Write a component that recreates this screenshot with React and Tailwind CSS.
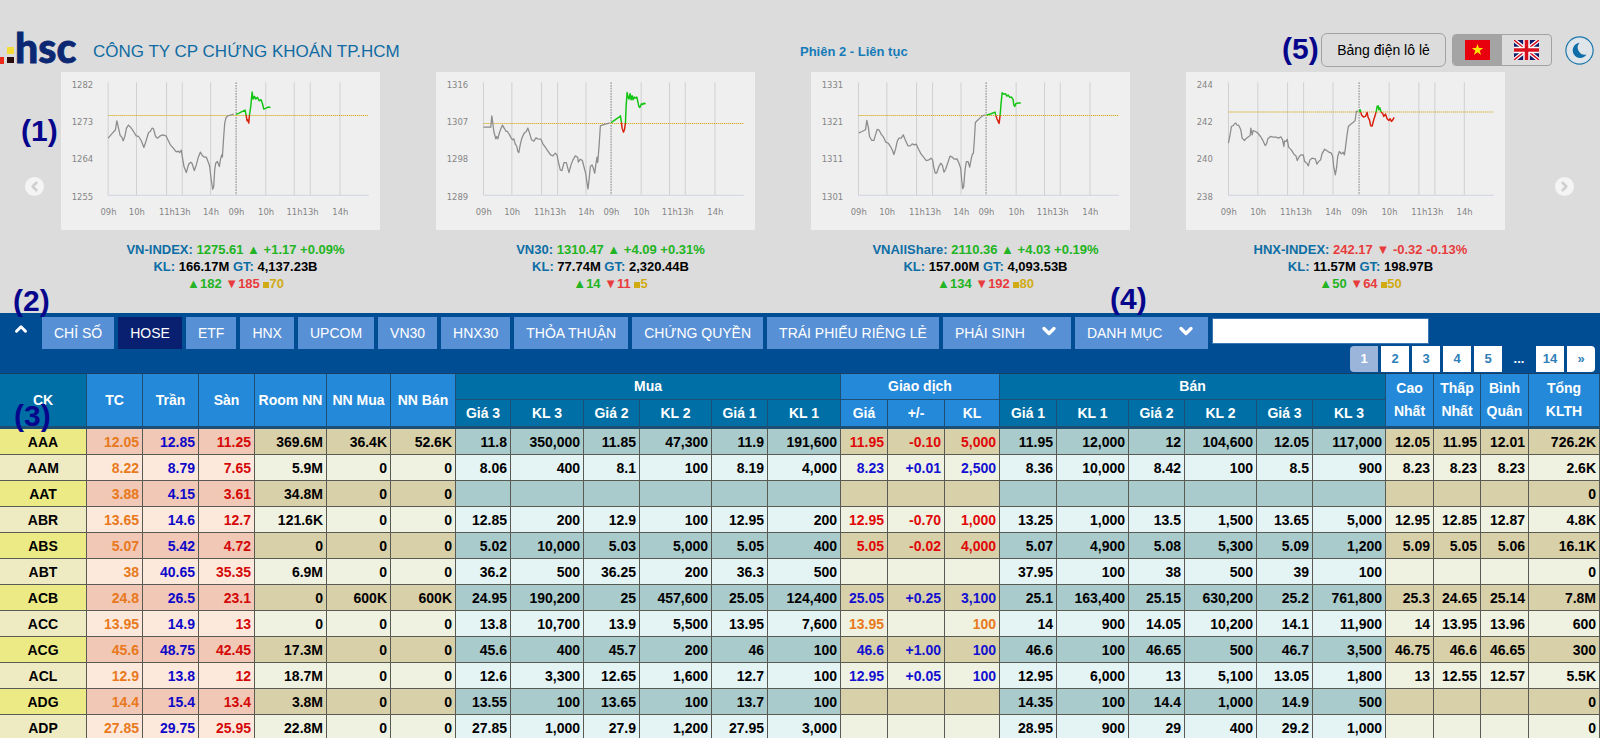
import React, { useState } from 'react';
import { ChevronDown, ChevronLeft, ChevronRight, ChevronUp } from 'lucide-react';

const HOURS = ['09h', '10h', '11h', '13h', '14h', '09h', '10h', '11h', '13h', '14h'];

const INDEXES = [
  {
    name: 'VN-INDEX',
    value: '1275.61',
    change: '+1.17 +0.09%',
    up: true,
    volume: '166.17M',
    total: '4,137.23B',
    counts: ['182', '185', '70'],
    levels: ['1282', '1273', '1264', '1255'],
    grid: [141, 226, 316, 363, 448, 524, 613, 698, 746, 835],
    dx: -183,
    reference: 130,
    previous:
      '324,355 335,342 346,330 350,303 353,315 360,347 365,352 369,363 374,350 379,325 385,316 391,322 400,335 408,348 415,350 423,362 431,383 437,365 445,338 450,335 456,325 460,327 466,350 472,355 480,348 488,345 497,348 504,362 511,376 519,385 528,396 534,394 538,398 543,391 546,410 551,440 558,458 565,433 571,427 575,430 582,452 588,435 594,412 600,397 606,407 612,412 618,412 625,430 628,440 632,475 637,508 640,500 643,450 646,430 651,425 657,440 660,420 664,405 666,412 670,350 673,310 677,293 683,288 700,283',
    today: [
      ['up', '707,284 716,280 726,275 734,271 737,286'],
      ['down', '737,286 740,303 742,300 745,310 747,286'],
      ['up', '747,286 751,260 755,217 758,238 762,230 766,238 771,233 776,243 782,240 786,252 790,268 797,265 803,262 810,263'],
    ],
  },
  {
    name: 'VN30',
    value: '1310.47',
    change: '+4.09 +0.31%',
    up: true,
    volume: '77.74M',
    total: '2,320.44B',
    counts: ['14', '11', '5'],
    levels: ['1316', '1307', '1298', '1289'],
    grid: [142, 227, 316, 364, 449, 524, 614, 699, 746, 835],
    dx: -48,
    reference: 154,
    previous:
      '190,322 212,322 215,288 218,310 221,335 227,357 230,350 233,357 238,338 243,325 247,316 252,325 258,335 262,335 268,345 273,355 277,360 281,357 285,372 290,380 293,395 296,398 300,375 305,355 312,340 318,335 323,325 328,340 334,360 341,364 347,354 353,357 362,358 368,372 375,382 382,392 391,405 398,408 405,400 410,405 414,425 420,450 425,452 431,428 438,428 446,458 452,435 458,420 465,408 472,412 474,427 480,418 486,422 492,445 496,460 500,490 503,507 507,470 510,440 515,435 519,445 523,460 527,430 530,412 532,428 536,380 540,318 545,316 568,309',
    today: [
      ['up', '572,309 580,303 590,296 598,291 600,288 603,308'],
      ['down', '603,308 605,325 609,337 612,330 615,310'],
      ['up', '615,310 617,260 620,218 623,232 626,238 629,222 632,240 635,228 638,240 641,232 645,235 649,232 652,245 655,260 658,263 663,252 667,254 671,250 675,253'],
    ],
  },
  {
    name: 'VNAllShare',
    value: '2110.36',
    change: '+4.03 +0.19%',
    up: true,
    volume: '157.00M',
    total: '4,093.53B',
    counts: ['134', '192', '80'],
    levels: ['1331', '1321', '1311', '1301'],
    grid: [142, 227, 316, 364, 449, 524, 614, 699, 746, 835],
    dx: -33,
    reference: 130,
    previous:
      '176,339 186,335 196,330 200,302 205,325 208,350 215,362 221,362 226,345 231,329 236,330 243,343 250,352 257,367 264,370 272,382 277,392 281,404 286,388 291,365 296,355 303,355 309,345 315,360 323,378 330,378 336,372 342,375 348,373 355,388 362,402 370,412 378,422 386,420 392,415 397,420 400,440 405,460 409,460 415,442 421,430 426,436 431,457 436,448 442,430 449,409 456,412 462,418 470,417 476,430 481,445 484,480 487,506 490,500 494,450 498,425 503,425 508,442 512,420 516,403 519,400 522,360 525,308 530,303 545,289 554,285',
    today: [
      ['up', '558,286 572,282 584,277 586,287'],
      ['down', '586,287 590,298 596,311 599,287'],
      ['up', '599,287 602,250 605,219 609,223 615,222 619,229 623,226 628,233 633,232 638,240 640,256 643,260 646,252 652,250 661,250'],
    ],
  },
  {
    name: 'HNX-INDEX',
    value: '242.17',
    change: '-0.32 -0.13%',
    up: false,
    volume: '11.57M',
    total: '198.97B',
    counts: ['50', '64', '50'],
    levels: ['244', '242', '240', '238'],
    grid: [127, 215, 304, 352, 440, 518, 608, 697, 745, 833],
    dx: -75,
    reference: 120,
    previous:
      '202,370 206,350 211,320 217,317 220,312 224,310 227,315 233,317 239,330 243,355 250,362 256,355 263,350 267,347 269,325 273,345 276,332 283,335 290,340 298,350 304,360 312,377 316,372 320,357 328,350 336,352 344,352 352,355 359,351 364,360 368,380 370,363 375,365 378,358 382,382 390,390 398,403 404,408 408,422 414,410 420,405 426,405 430,425 437,430 441,438 446,420 452,415 458,416 462,417 467,433 472,425 478,420 482,402 490,388 497,393 503,397 510,400 514,410 517,440 522,465 526,440 529,410 534,395 540,402 545,397 549,405 552,385 557,345 561,320 567,314 574,309 581,303 585,275 590,274',
    today: [
      ['up', '594,277 596,270 598,277'],
      ['down', '598,277 601,287 607,292 612,290 617,278 620,293 624,300 628,318 632,319 637,300 641,287 644,277'],
      ['up', '644,277 647,260 650,258 652,270 655,264 659,277'],
      ['down', '659,277 664,282 667,290 672,283 677,297 682,302 686,297 690,305 694,300 698,293'],
    ],
  },
];

const TABS = [
  'CHỈ SỐ',
  'HOSE',
  'ETF',
  'HNX',
  'UPCOM',
  'VN30',
  'HNX30',
  'THỎA THUẬN',
  'CHỨNG QUYỀN',
  'TRÁI PHIẾU RIÊNG LẺ',
];

const PAGES = ['1', '2', '3', '4', '5', '...', '14', '»'];

const COL_WIDTHS = [
  87, 56, 56, 56, 72, 64, 65, 55, 73, 56, 72, 56, 73, 47, 57, 55, 57, 72, 56, 72, 56, 73, 48, 47, 48, 71,
];

const SUB_HEADERS = [
  'Giá 3', 'KL 3', 'Giá 2', 'KL 2', 'Giá 1', 'KL 1',
  'Giá', '+/-', 'KL',
  'Giá 1', 'KL 1', 'Giá 2', 'KL 2', 'Giá 3', 'KL 3',
];

// ck | tc tran san | room nnmua nnban | mua x6 | gia +/- kl | ban x6 | cao thap binhquan tong
const ROWS = `
AAA|12.05|12.85|11.25|369.6M|36.4K|52.6K|11.8|350,000|11.85|47,300|11.9|191,600|11.95|-0.10|5,000|11.95|12,000|12|104,600|12.05|117,000|12.05|11.95|12.01|726.2K
AAM|8.22|8.79|7.65|5.9M|0|0|8.06|400|8.1|100|8.19|4,000|8.23|+0.01|2,500|8.36|10,000|8.42|100|8.5|900|8.23|8.23|8.23|2.6K
AAT|3.88|4.15|3.61|34.8M|0|0|||||||||||||||||||0
ABR|13.65|14.6|12.7|121.6K|0|0|12.85|200|12.9|100|12.95|200|12.95|-0.70|1,000|13.25|1,000|13.5|1,500|13.65|5,000|12.95|12.85|12.87|4.8K
ABS|5.07|5.42|4.72|0|0|0|5.02|10,000|5.03|5,000|5.05|400|5.05|-0.02|4,000|5.07|4,900|5.08|5,300|5.09|1,200|5.09|5.05|5.06|16.1K
ABT|38|40.65|35.35|6.9M|0|0|36.2|500|36.25|200|36.3|500||||37.95|100|38|500|39|100||||0
ACB|24.8|26.5|23.1|0|600K|600K|24.95|190,200|25|457,600|25.05|124,400|25.05|+0.25|3,100|25.1|163,400|25.15|630,200|25.2|761,800|25.3|24.65|25.14|7.8M
ACC|13.95|14.9|13|0|0|0|13.8|10,700|13.9|5,500|13.95|7,600|13.95||100|14|900|14.05|10,200|14.1|11,900|14|13.95|13.96|600
ACG|45.6|48.75|42.45|17.3M|0|0|45.6|400|45.7|200|46|100|46.6|+1.00|100|46.6|100|46.65|500|46.7|3,500|46.75|46.6|46.65|300
ACL|12.9|13.8|12|18.7M|0|0|12.6|3,300|12.65|1,600|12.7|100|12.95|+0.05|100|12.95|6,000|13|5,100|13.05|1,800|13|12.55|12.57|5.5K
ADG|14.4|15.4|13.4|3.8M|0|0|13.55|100|13.65|100|13.7|100||||14.35|100|14.4|1,000|14.9|500||||0
ADP|27.85|29.75|25.95|22.8M|0|0|27.85|1,000|27.9|1,200|27.95|3,000||||28.95|900|29|400|29.2|1,000||||0
`.trim().split('\n').map((line) => line.split('|'));

const cellBg = (col, odd) => {
  if (col < 4) return odd ? 'bg-[#f1c7b5]' : 'bg-[#fde9dc]';
  if ((col > 6 && col < 13) || (col > 15 && col < 22)) return odd ? 'bg-[#aacbcc]' : 'bg-[#e4f3f4]';
  return odd ? 'bg-[#d8d0a8]' : 'bg-[#eff2e0]';
};

const cellColor = (col, row) => {
  if (col === 1) return 'text-[#e8791c]';
  if (col === 2) return 'text-[#0e08c8]';
  if (col === 3) return 'text-[#d40808]';
  if (col > 12 && col < 16) {
    if (row[14].startsWith('-')) return 'text-[#e00808]';
    if (row[14].startsWith('+')) return 'text-[#1410d0]';
    return 'text-[#e8791c]';
  }
  return 'text-black';
};

const IndexChart = ({ index }) => (
  <svg viewBox="0 0 954 474" className="block w-full bg-[#efefef]" role="img" aria-label={index.name}>
    {index.grid.map((x, i) => (
      <line
        key={x} x1={x} x2={x} y1="31" y2="369" strokeWidth="3"
        stroke={i === 5 ? '#858585' : '#d0d0d2'}
        strokeDasharray={i === 5 ? '5 3' : undefined}
      />
    ))}
    <line x1={index.grid[0]} x2="921" y1="369" y2="369" stroke="#ccd3e0" strokeWidth="3" />
    <line
      x1={index.grid[0]} x2="921" y1={index.reference} y2={index.reference}
      stroke="#d6b02c" strokeWidth="3" strokeDasharray="4 2"
    />
    <g transform={`translate(${index.dx} -157)`} fill="none" strokeLinejoin="round">
      <polyline points={index.previous} stroke="#8c8c8c" strokeWidth="3.8" />
      {index.today.map(([dir, points]) => (
        <polyline key={points} points={points} stroke={dir === 'up' ? '#12c412' : '#d8200c'} strokeWidth="4.4" />
      ))}
    </g>
    <g fill="#858585" fontSize="28" fontFamily="'DejaVu Sans Condensed', 'DejaVu Sans', sans-serif">
      {index.levels.map((level, i) => (
        <text key={level} x="32" y={[49, 160, 270, 383][i]}>{level}</text>
      ))}
      {index.grid.map((x, i) => (
        <text key={x} x={x + 1} y="427" textAnchor="middle">{HOURS[i]}</text>
      ))}
    </g>
  </svg>
);

const IndexCard = ({ index }) => {
  const tone = index.up ? 'text-[#22b422]' : 'text-[#e83c3c]';
  return (
    <div>
      <div className="w-[85%] ml-[13px]">
        <IndexChart index={index} />
      </div>
      <div className="mt-[11px] text-center text-[13px] leading-[17px] font-bold text-[#0d6ea5]">
        <p>
          {index.name}: <span className={tone}>{index.value} {index.up ? '▲' : '▼'} {index.change}</span>
        </p>
        <p>
          KL: <span className="text-black">{index.volume}</span> GT: <span className="text-black">{index.total}</span>
        </p>
        <p>
          <span className="text-[#22b422]">▲{index.counts[0]}</span>{' '}
          <span className="text-[#e83c3c]">▼{index.counts[1]}</span>{' '}
          <span className="text-[#d0ab14]"><span className="inline-block size-[6px] bg-[#d0ab14]" />{index.counts[2]}</span>
        </p>
      </div>
    </div>
  );
};

const Logo = () => (
  <svg width="78" height="34" viewBox="0 0 78 34" className="overflow-visible" role="img" aria-label="hsc">
    <rect x="0" y="24" width="4" height="7" fill="#ee2a1a" />
    <rect x="7" y="14" width="7" height="7" fill="#f6dc38" />
    <rect x="7" y="24" width="7" height="6" fill="#2c0c0c" />
    <text
      x="15" y="30" fontSize="41" fontWeight="900" fill="#0d2873" stroke="#0d2873" strokeWidth="0.8"
      fontFamily="Lato, sans-serif"
    >
      hsc
    </text>
  </svg>
);

const VietnamFlag = () => (
  <svg width="25" height="20" viewBox="0 0 25 20">
    <rect width="25" height="20" fill="#e8000f" />
    <path d="M12.5 4l1.4 4.1h4.3l-3.5 2.6 1.4 4.2-3.6-2.6-3.6 2.6 1.4-4.2-3.5-2.6h4.3z" fill="#ffe500" />
  </svg>
);

const BritishFlag = () => (
  <svg width="25" height="20" viewBox="0 0 25 20">
    <rect width="25" height="20" fill="#111c68" />
    <path d="M0 0l25 20M25 0L0 20" stroke="#fff" strokeWidth="4" />
    <path d="M0 0l25 20M25 0L0 20" stroke="#d8101e" strokeWidth="1.4" />
    <path d="M12.5 0v20M0 10h25" stroke="#fff" strokeWidth="6.6" />
    <path d="M12.5 0v20M0 10h25" stroke="#d8101e" strokeWidth="3.6" />
  </svg>
);

const Marker = ({ children, className }) => (
  <span className={`absolute z-10 text-[30px] leading-[30px] font-bold text-[#06068c] ${className}`}>{children}</span>
);

const tabClass = 'h-8 px-3 text-[14px] leading-8 text-white whitespace-nowrap';
const thClass = 'border-r border-b border-[#1d4f74] font-bold text-[14px]';

const App = () => {
  const [activeTab, setActiveTab] = useState('HOSE');
  const [page, setPage] = useState('1');
  const [keyword, setKeyword] = useState('');

  return (
    <div className="relative h-screen overflow-hidden bg-[#dcdcdc] font-['Liberation_Sans',Arial,sans-serif] text-black">
      <header className="grid grid-cols-2 items-center pt-[33px]">
        <div className="flex items-center">
          <Logo />
          <h1 className="ml-[15px] pt-1 text-[17px] leading-[30px] text-[#0f6ba3]">CÔNG TY CP CHỨNG KHOÁN TP.HCM</h1>
        </div>
        <div className="flex items-center pr-[6px]">
          <p className="mr-auto pt-1 text-[13px] font-bold text-[#157bb8]">Phiên 2 - Liên tục</p>
          <button className="h-[34px] w-[125px] rounded-md border border-[#a2a2a2] text-[14px]">Bảng điện lô lẻ</button>
          <div className="ml-[6px] flex h-8 w-[100px] overflow-hidden rounded border border-[#a2a2a2]">
            <button aria-label="Tiếng Việt" className="flex flex-1 items-center justify-center bg-[#a4a4a4]">
              <VietnamFlag />
            </button>
            <button aria-label="English" className="flex flex-1 items-center justify-center">
              <BritishFlag />
            </button>
          </div>
          <button aria-label="Chế độ tối" className="ml-[13px]">
            <svg width="29" height="29" viewBox="0 0 29 29">
              <circle cx="14.5" cy="14.5" r="13.6" fill="#dfe5e9" stroke="#1d77ab" strokeWidth="1.2" />
              <path d="M14.6 6.8A7.6 7.6 0 1 0 21.6 18.6A7.2 7.2 0 0 1 14.6 6.8Z" fill="#0f6ea8" />
            </svg>
          </button>
        </div>
      </header>

      <section className="relative mt-[5px] pr-[52px] pb-[21px] pl-12">
        <div className="grid grid-cols-4">
          {INDEXES.map((index) => <IndexCard key={index.name} index={index} />)}
        </div>
        <button aria-label="Trước" className="absolute left-[25px] top-[105px] flex size-[19px] items-center justify-center rounded-full bg-[#f4f4f4] text-[#cfcfcf]">
          <ChevronLeft size={15} strokeWidth={4} />
        </button>
        <button aria-label="Sau" className="absolute right-[26px] top-[105px] flex size-[19px] items-center justify-center rounded-full bg-[#f4f4f4] text-[#cfcfcf]">
          <ChevronRight size={15} strokeWidth={4} />
        </button>
      </section>

      <nav className="bg-[#004d94] pt-1 pb-px">
        <div className="flex items-start gap-1">
          <button aria-label="Thu gọn" className="flex h-6 w-[38px] items-center justify-center pl-[3px] text-white">
            <ChevronUp size={18} strokeWidth={4} />
          </button>
          {TABS.map((tab) => (
            <button
              key={tab}
              onClick={() => setActiveTab(tab)}
              className={`${tabClass} ${activeTab === tab ? 'bg-[#08206f]' : 'bg-[#5890d6]'}`}
            >
              {tab}
            </button>
          ))}
          {['PHÁI SINH', 'DANH MỤC'].map((tab) => (
            <button key={tab} className={`${tabClass} flex gap-[14px] bg-[#5890d6]`}>
              {tab}
              <ChevronDown size={20} strokeWidth={4} className="mt-1" />
            </button>
          ))}
          <input
            aria-label="Mã chứng khoán"
            value={keyword}
            onChange={(e) => setKeyword(e.target.value)}
            className="mt-px h-[26px] w-[217px] border border-[#3a76b4] bg-white px-2 text-[14px] outline-none"
          />
        </div>
        <div className="-mt-[3px] flex justify-end gap-[3px] pr-[5px] text-[13px] leading-[26px] font-bold">
          {PAGES.map((item, i) =>
            item === '...' ? (
              <span key={item} className="w-7 text-center text-white">{item}</span>
            ) : (
              <button
                key={item}
                onClick={() => setPage(item)}
                className={`w-7 ${i === 0 ? 'rounded-l' : ''} ${i === PAGES.length - 1 ? 'rounded-r' : ''} ${
                  page === item ? 'bg-[#9ab4da] text-white' : 'bg-white text-[#2f7fb8]'
                }`}
              >
                {item}
              </button>
            )
          )}
        </div>
      </nav>

      <table className="w-full table-fixed border-separate border-spacing-0 border-t border-[#173f66] text-[14px] font-bold">
        <colgroup>
          {COL_WIDTHS.map((width, i) => <col key={i} style={{ width: `${width / 16}%` }} />)}
        </colgroup>
        <thead className="bg-[#2489d8] text-white">
          <tr className="h-[26px]">
            <th rowSpan={2} className={`${thClass} border-b-3 bg-[#006fa6]`}>CK</th>
            {['TC', 'Trần', 'Sàn', 'Room NN', 'NN Mua', 'NN Bán'].map((label) => (
              <th key={label} rowSpan={2} className={`${thClass} border-b-3 whitespace-nowrap`}>{label}</th>
            ))}
            <th colSpan={6} className={`${thClass} bg-[#006fa6]`}>Mua</th>
            <th colSpan={3} className={thClass}>Giao dịch</th>
            <th colSpan={6} className={`${thClass} bg-[#006fa6]`}>Bán</th>
            {['Cao Nhất', 'Thấp Nhất', 'Bình Quân', 'Tổng KLTH'].map((label) => (
              <th key={label} rowSpan={2} className={`${thClass} border-b-3 leading-[23px]`}>
                {label.split(' ')[0]}<br />{label.split(' ')[1]}
              </th>
            ))}
          </tr>
          <tr className="h-[29px]">
            {SUB_HEADERS.map((label, i) => (
              <th key={i} className={`${thClass} border-b-3 ${i > 5 && i < 9 ? '' : 'bg-[#006fa6]'}`}>{label}</th>
            ))}
          </tr>
        </thead>
        <tbody>
          {ROWS.map((row, r) => (
            <tr key={row[0]} className="h-[26px]">
              {row.map((value, c) =>
                c === 0 ? (
                  <th
                    key={c}
                    scope="row"
                    className={`border-r border-b border-[#5a5a55] leading-5 ${r % 2 === 0 ? 'bg-[#ebea84]' : 'bg-[#eeebc2]'}`}
                  >
                    {value}
                  </th>
                ) : (
                  <td
                    key={c}
                    className={`border-r border-b border-[#5a5a55] pr-[3px] text-right leading-5 ${cellBg(c, r % 2 === 0)} ${cellColor(c, row)}`}
                  >
                    {value}
                  </td>
                )
              )}
            </tr>
          ))}
        </tbody>
      </table>

      <Marker className="left-[21px] top-[116px]">(1)</Marker>
      <Marker className="left-[13px] top-[286px]">(2)</Marker>
      <Marker className="left-[14px] top-[401px]">(3)</Marker>
      <Marker className="left-[1110px] top-[284px]">(4)</Marker>
      <Marker className="left-[1282px] top-[34px]">(5)</Marker>
    </div>
  );
};

export default App;
